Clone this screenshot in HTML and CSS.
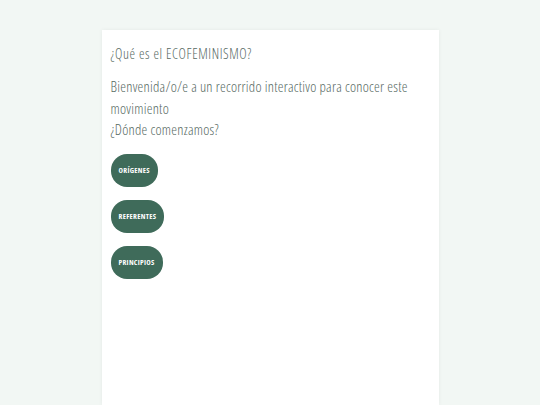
FILE: index.html
```html
<!DOCTYPE html>
<html lang="es">
  <head>
    <meta charset="UTF-8" />
    <title>¿Qué es el ECOFEMINISMO?</title>
    <link rel="stylesheet" href="styles.css">
  </head>
  <body>
    <div class="card">
      <h1 class="title">¿Qué es el ECOFEMINISMO?</h1>
      <p class="intro">
        Bienvenida/o/e a un recorrido interactivo para conocer este movimiento<br />
        ¿Dónde comenzamos?
      </p>
      <div class="menu">
        <button class="btn">Orígenes</button>
        <button class="btn">Referentes</button>
        <button class="btn">Principios</button>
      </div>
    </div>
  </body>
</html>
```

FILE: styles.css
```css
body {
  margin: 0;
  background: #f2f7f4;
  font-family: "Open Sans", Lato, sans-serif;
  font-stretch: 75%;
  color: #56695f;
}

.card {
  width: 337px;
  min-height: 375px;
  margin: 30px auto 0;
  padding: 14px 9px 20px;
  box-sizing: border-box;
  background: #fff;
  box-shadow: 0 0 4px rgba(0, 0, 0, 0.06);
}

.title {
  margin: 0 0 12px;
  font-size: 14px;
  font-weight: 300;
  letter-spacing: 0.6px;
  line-height: 20px;
}

.intro {
  margin: 0 0 13px;
  font-size: 14.5px;
  font-weight: 300;
  letter-spacing: 0.25px;
  line-height: 21.5px;
  max-width: 310px;
}

.menu {
  display: flex;
  flex-direction: column;
  align-items: flex-start;
  gap: 13px;
}

.btn {
  height: 33px;
  padding: 0 8px;
  border: none;
  border-radius: 16px;
  background: #3f6b5a;
  color: #fff;
  font-family: "Open Sans", Lato, sans-serif;
  font-stretch: 75%;
  font-size: 7.5px;
  font-weight: bold;
  letter-spacing: 0.3px;
  text-transform: uppercase;
  cursor: pointer;
}
```
